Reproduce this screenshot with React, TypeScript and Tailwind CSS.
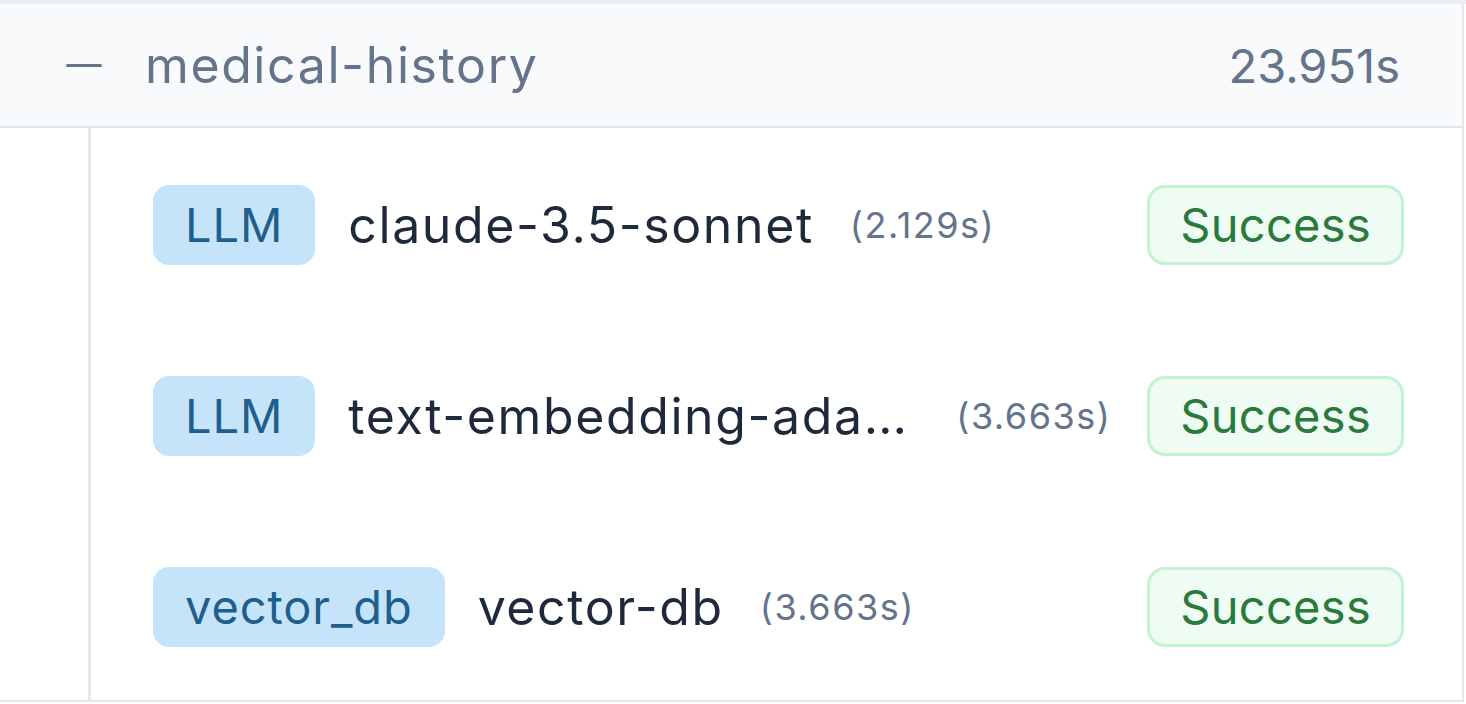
import React from "react";

const rows = [
  { type: "LLM", name: "claude-3.5-sonnet", dur: "(2.129s)" },
  { type: "LLM", name: "text-embedding-ada-002", dur: "(3.663s)" },
  { type: "vector_db", name: "vector-db", dur: "(3.663s)" },
];

export default function App() {
  return (
    <div
      className="w-[1466px] h-[704px] bg-white overflow-hidden"
      style={{ fontFamily: "Inter, 'Noto Sans', sans-serif" }}
    >
      <div className="h-[4px] bg-[#e8edf3]" />
      <div className="w-[1464px] h-[698px] border-r-2 border-b-2 border-[#e5e9ef] flex flex-col">
        <div className="h-[124px] shrink-0 bg-[#f8fafc] border-b-2 border-[#e2e7ee] flex items-center pl-[66px] pr-[62px]">
          <div className="w-[36px] h-[3px] rounded-full bg-[#64748b]" />
          <div className="ml-[43px] text-[50px] tracking-[1.6px] leading-none text-[#64748b]">medical-history</div>
          <div className="ml-auto text-[47px] leading-none text-[#64748b]">23.951s</div>
        </div>
        <div className="flex-1 ml-[88px] border-l-[3px] border-[#e5e9ef] flex flex-col pt-[1px]">
          {rows.map((r, i) => (
            <div key={i} className="h-[191px] flex items-center pl-[62px] pr-[58px]">
              <div className="h-[80px] px-[32px] rounded-[16px] bg-[#c6e4f9] text-[#1f5f8e] text-[47px] tracking-[0.9px] leading-none flex items-center">
                {r.type}
              </div>
              <div className="ml-[33px] max-w-[566px] truncate text-[50px] tracking-[1.6px] leading-[62px] text-[#1e293b]">
                {r.name}
              </div>
              <div className={(i === 1 ? "ml-[42px]" : "ml-[36px]") + " text-[36px] tracking-[1.5px] leading-none text-[#64748b]"}>{r.dur}</div>
              <div className="ml-auto h-[80px] px-[30px] rounded-[18px] bg-[#effcf3] border-[3px] border-[#c4f0d3] text-[#2b7a3d] text-[47px] tracking-[0.3px] leading-none flex items-center">
                Success
              </div>
            </div>
          ))}
        </div>
      </div>
    </div>
  );
}
